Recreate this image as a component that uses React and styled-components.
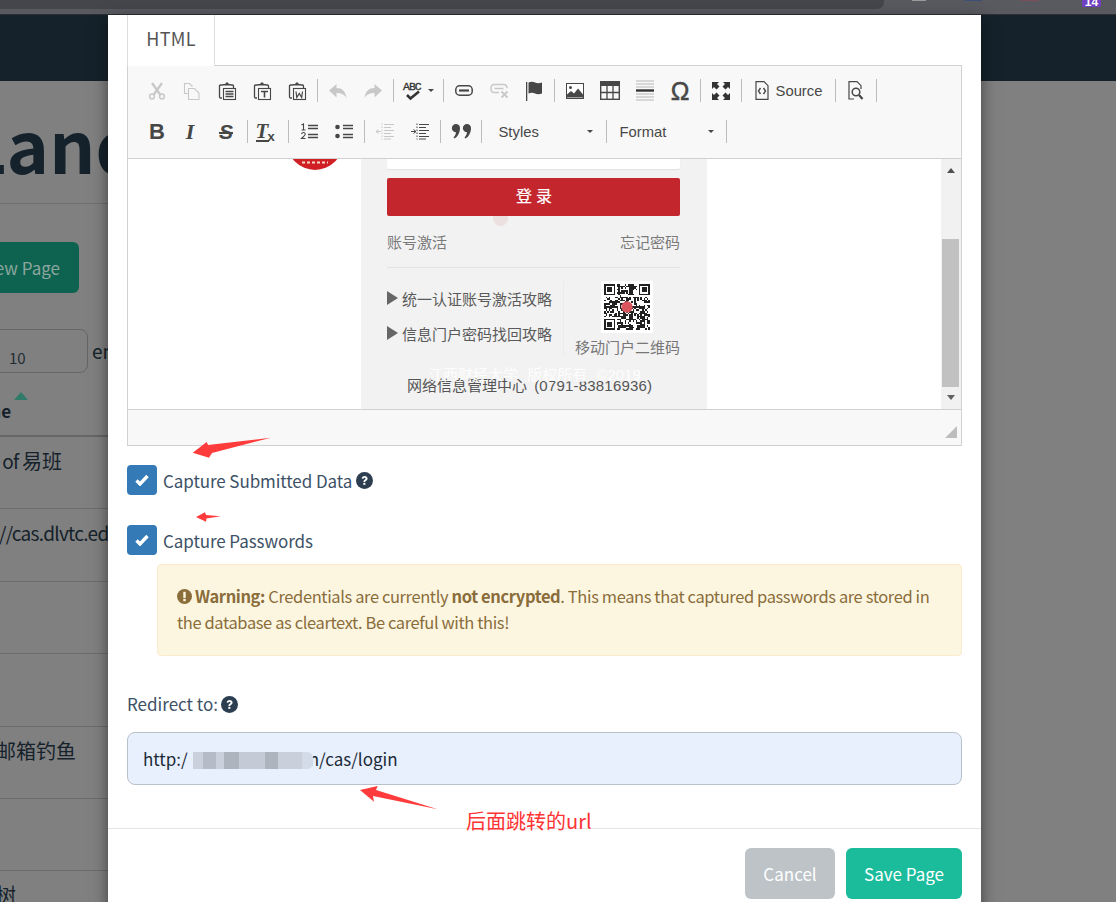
import React from "react";
import styled, { createGlobalStyle } from "styled-components";

const UI = `"Noto Sans CJK SC", "Source Sans Pro", sans-serif`;
const CKE = `"Liberation Sans", Arial, sans-serif`;
const CJK = `"Liberation Sans", "Noto Sans CJK SC", sans-serif`;

const Global = createGlobalStyle`
  html, body { margin: 0; padding: 0; background: #808080; }
  * { box-sizing: border-box; }
`;

const Page = styled.div`
  position: relative;
  width: 1116px;
  height: 902px;
  overflow: hidden;
  background: #808080;
  font-family: ${UI};
  color: #15222b;
`;

/* browser chrome sliver */
const Chrome = styled.div`
  height: 15px;
  background: #595a60;
  border-bottom: 1px solid #2f3033;
  display: flex;
  align-items: flex-start;
`;
const AddressBar = styled.div`
  width: 884px;
  height: 9px;
  background: #45464b;
  border-bottom-right-radius: 7px;
`;
const Ext = styled.div`
  width: ${p => p.$w}px;
  height: 1px;
  margin-left: ${p => p.$gap}px;
  background: ${p => p.$c};
`;
const Badge = styled.div`
  width: 19px;
  height: 7px;
  margin-left: 43px;
  background: #6f3fc4;
  border-radius: 0 0 2px 2px;
  color: #fff;
  font: 700 12px/5px ${CKE};
  text-align: center;
  overflow: hidden;
`;

const Navbar = styled.div`
  height: 66px;
  background: #15222b;
`;

/* dimmed page behind the modal */
const Backdrop = styled.div`
  width: 108px;
  height: 821px;
  overflow: hidden;
`;
const Heading = styled.h1`
  margin: 0 0 0 -35px;
  height: 122px;
  padding-top: 20px;
  font: 700 72px/84px ${UI};
  white-space: nowrap;
`;
const Rule = styled.div`
  height: 1px;
  background: #6f6f6f;
`;
const NewButton = styled.div`
  width: 120px;
  height: 51px;
  margin: 38px 0 0 -41px;
  padding-right: 19px;
  background: #0e6350;
  border-radius: 6px;
  color: #8ba69e;
  font: 400 17px/51px ${UI};
  text-align: right;
  white-space: nowrap;
`;
const Controls = styled.div`
  display: flex;
  align-items: flex-start;
  gap: 4px;
  margin-top: 36px;
`;
const Select = styled.div`
  width: 108px;
  height: 44px;
  flex: none;
  margin-left: -20px;
  padding: 17px 0 0 28px;
  border: 1px solid #666;
  border-radius: 8px;
  font: 400 15px/22px ${UI};
  color: #222d33;
`;
const Entries = styled.span`
  font: 400 19px/44px ${UI};
  white-space: nowrap;
`;
const HeadCell = styled.div`
  height: 64px;
  padding-top: 19px;
  border-bottom: 2px solid #666;
`;
const SortCaret = styled.div`
  width: 0;
  margin-left: 14px;
  border-left: 7px solid transparent;
  border-right: 7px solid transparent;
  border-bottom: 8px solid #2f7a68;
`;
const HeadName = styled.div`
  margin: -1px 0 0 -38px;
  font: 700 17px/24px ${UI};
`;
const TableRow = styled.div`
  height: 72.4px;
  padding-top: 10px;
  border-bottom: 1px solid #6c6c6c;
  font: 400 19px/28px ${UI};
  letter-spacing: -0.7px;
  white-space: nowrap;
`;
const Cell = styled.div`
  margin-left: ${p => p.$left || 0}px;
`;
const Han = styled.span`
  font-size: 20px;
  letter-spacing: 0;
`;

/* modal */
const Modal = styled.div`
  position: absolute;
  left: 108px;
  top: 15px;
  width: 873px;
  height: 900px;
  background: #fff;
  box-shadow: 0 5px 15px rgba(0, 0, 0, 0.5);
  color: #3d5166;
`;
const ModalBody = styled.div`
  padding: 0 19px;
`;
const TabBar = styled.div`
  height: 50px;
  display: flex;
`;
const Tab = styled.div`
  width: 88px;
  height: 51px;
  border: 1px solid #ddd;
  border-width: 0 1px;
  background: #fff;
  color: #555;
  font: 400 18px/46px ${UI};
  text-align: center;
  letter-spacing: 0.3px;
  position: relative;
  z-index: 1;
`;
const Editor = styled.div`
  width: 835px;
  border: 1px solid #d1d1d1;
  background: #f8f8f8;
`;
const Toolbar = styled.div`
  height: 93px;
  padding: 4px 0 0 11.5px;
  border-bottom: 1px solid #d1d1d1;
  background: #f8f8f8;
`;
const ToolRow = styled.div`
  height: 41px;
  display: flex;
  align-items: center;
`;
const ToolBtn = styled.div`
  width: ${p => p.$w || 35}px;
  height: 30px;
  flex: none;
  display: flex;
  align-items: center;
  justify-content: center;
  color: ${p => (p.$off ? "#c8c8c8" : "#474747")};
  svg { display: block; overflow: visible; }
`;
const Sep = styled.div`
  width: 1px;
  height: 23px;
  flex: none;
  margin: 0 3px 0 2px;
  background: #bcbcbc;
`;
const BoldGlyph = styled.span`
  font: 700 22px/22px ${CKE};
  color: #474747;
`;
const OmegaGlyph = styled.span`
  font: 400 25px/24px ${CKE};
  color: #474747;
  -webkit-text-stroke: 0.5px #474747;
`;
const ItalicGlyph = styled.span`
  font: italic 700 22px/22px "Liberation Serif", serif;
  color: #474747;
  margin-right: 4px;
`;
const StrikeGlyph = styled.span`
  font: italic 700 21px/22px ${CKE};
  color: #474747;
  text-decoration: line-through;
  text-decoration-thickness: 2px;
  margin-right: 2px;
`;
const ClearGlyph = styled.span`
  font: italic 700 21px/19px "Liberation Serif", serif;
  color: #474747;
  border-bottom: 2px solid #474747;
  display: inline-block;
  height: 20px;
  width: 13px;
  margin-right: 12px;
  position: relative;
  & > i {
    position: absolute;
    left: 12px;
    top: 8px;
    font: 700 13px/13px ${CKE};
  }
`;
const SourceLabel = styled.span`
  font: 400 14.8px/18px ${CKE};
  color: #474747;
  margin-left: 7px;
`;
const Combo = styled.div`
  width: ${p => p.$w}px;
  height: 30px;
  flex: none;
  display: flex;
  align-items: center;
  justify-content: space-between;
  padding: 0 ${p => p.$right}px 0 ${p => p.$left}px;
  font: 400 14.8px/18px ${CKE};
  color: #474747;
`;
const DownArrow = styled.span`
  width: 0;
  margin-left: ${p => p.$left || 0}px;
  border-left: 3.5px solid transparent;
  border-right: 3.5px solid transparent;
  border-top: 3.5px solid #474747;
`;

/* iframe content */
const Frame = styled.div`
  height: 250px;
  background: #fff;
  display: flex;
  overflow: hidden;
`;
const FrameLeft = styled.div`
  width: 233px;
  padding-left: 159px;
`;
const LoginPanel = styled.div`
  position: relative;
  width: 346px;
  height: 250px;
  padding: 0 27px 0 26px;
  background: #f2f2f2;
  font-family: ${CJK};
`;
const FrameRight = styled.div`
  flex: 1;
`;
const Scrollbar = styled.div`
  width: 20px;
  padding: 0 2px 0 1px;
  background: #f1f1f1;
  display: flex;
  flex-direction: column;
  align-items: center;
`;
const ScrollArrow = styled.div`
  width: 0;
  margin: ${p => p.$m};
  border-left: 4px solid transparent;
  border-right: 4px solid transparent;
  ${p => (p.$down ? "border-top: 5px solid #606060;" : "border-bottom: 5px solid #505050;")}
`;
const ScrollThumb = styled.div`
  width: 100%;
  height: 148px;
  margin-top: 66px;
  background: #c1c1c1;
`;
const FakeInput = styled.div`
  height: 10px;
  background: #fff;
  border-radius: 0 0 2px 2px;
  box-shadow: 0 1px 1px #e2e2e2;
`;
const LoginButton = styled.div`
  position: relative;
  z-index: 1;
  height: 38px;
  margin-top: 9px;
  padding-left: 5px;
  background: #c4262e;
  border-radius: 2px;
  color: #fff;
  font: 400 16px/38px ${CJK};
  text-align: center;
  letter-spacing: 4px;
  -webkit-text-stroke: 0.2px #fff;
`;
const Ripple = styled.div`
  position: absolute;
  left: 132px;
  top: 52px;
  width: 15px;
  height: 15px;
  border-radius: 50%;
  background: #ece0e1;
`;
const LinkRow = styled.div`
  display: flex;
  justify-content: space-between;
  margin-top: 16px;
  padding-bottom: 13px;
  border-bottom: 1px solid #e2e2e2;
  font-size: 15px;
  line-height: 22px;
  color: #7a7a7a;
`;
const InfoBlock = styled.div`
  display: flex;
  margin-top: 13px;
  height: 75px;
`;
const GuideList = styled.div`
  width: 177px;
  padding-top: 6px;
  border-right: 1px solid #ebebeb;
`;
const Guide = styled.div`
  display: flex;
  align-items: center;
  height: 22px;
  margin-bottom: 13px;
  font-size: 15px;
  color: #5a5a5a;
  white-space: nowrap;
  &::before {
    content: "";
    width: 0;
    margin-right: 4px;
    border-left: 11px solid #666;
    border-top: 7px solid transparent;
    border-bottom: 7px solid transparent;
  }
`;
const QrCol = styled.div`
  flex: 1;
  display: flex;
  flex-direction: column;
  align-items: flex-end;
`;
const QrBox = styled.div`
  width: 52px;
  height: 52px;
  margin-right: 27px;
  padding: 3px;
  background: #fff;
  svg { display: block; filter: blur(0.4px); }
`;
const QrCaption = styled.div`
  margin-top: 4px;
  font-size: 15px;
  line-height: 22px;
  color: #777;
  white-space: nowrap;
`;
const FooterLine = styled.div`
  margin: 19px 0 0 20px;
  font-size: 15px;
  line-height: 22px;
  color: #555;
  white-space: nowrap;
`;
const Phone = styled.span`
  margin-left: 3px;
  letter-spacing: 0.2px;
`;
const Copyright = styled.div`
  position: absolute;
  left: 67px;
  top: 205px;
  font-size: 15px;
  line-height: 22px;
  word-spacing: 5px;
  color: rgba(255, 255, 255, 0.9);
  white-space: nowrap;
`;
const EditorFoot = styled.div`
  height: 36px;
  border-top: 1px solid #d1d1d1;
  background: #f8f8f8;
  display: flex;
  justify-content: flex-end;
  align-items: flex-end;
  padding: 0 4px 7px 0;
`;
const Resizer = styled.div`
  width: 0;
  border-left: 12px solid transparent;
  border-bottom: 12px solid #bdbdbd;
`;

/* form */
const CheckRow = styled.div`
  display: flex;
  align-items: center;
  height: 30px;
  margin-top: ${p => p.$top}px;
  font: 400 17px/30px ${UI};
  letter-spacing: -0.08px;
`;
const CheckBox = styled.div`
  width: 30px;
  height: 30px;
  margin-right: 6px;
  background: #337ab7;
  border-radius: 4px;
  display: flex;
  align-items: center;
  justify-content: center;
`;
const CheckLabel = styled.span`
  margin-top: 2px;
`;
const Help = styled.span`
  display: inline-flex;
  margin: ${p => p.$top || 0}px 0 0 ${p => p.$left || 4}px;
  color: #2c3e50;
`;
const Warning = styled.div`
  margin: 9px 0 0 30px;
  height: 92px;
  padding: 18px 19px 0;
  background: #fcf6e1;
  border: 1px solid #faebcc;
  border-radius: 4px;
  color: #8a6d3b;
  font: 400 16.5px/26px ${UI};
  letter-spacing: -0.39px;
  b { font-weight: 700; }
  svg { vertical-align: -1px; margin-right: 3px; }
`;
const RedirectLabel = styled.div`
  margin-top: 35px;
  font: 400 17px/26px ${UI};
  display: flex;
  align-items: center;
`;
const UrlField = styled.div`
  height: 53px;
  margin-top: 15px;
  padding-left: 15px;
  background: #e8f0fe;
  border: 1px solid #b9c1cc;
  border-radius: 8px;
  color: #1c2a36;
  font: 400 17px/51px ${UI};
  white-space: nowrap;
`;
const Smudge = styled.span`
  display: inline-block;
  width: 120px;
  height: 17px;
  margin: 0 -4px 0 5px;
  vertical-align: -3px;
  border-radius: 0 6px 6px 0;
  filter: blur(0.5px);
  background: linear-gradient(
    90deg,
    #cad1dd 0 8%,
    #b5bcc8 8% 19%,
    #cad1dd 19% 26%,
    #adb4be 26% 38%,
    #c4cbd6 38% 60%,
    #adb4be 60% 71%,
    #c9d0dc 71% 91%,
    #d3dbe8 91% 100%
  );
`;
const Divider = styled.div`
  height: 1px;
  margin-top: 43px;
  background: #e5e5e5;
`;
const ModalFooter = styled.div`
  display: flex;
  justify-content: flex-end;
  gap: 11px;
  padding: 19px 19px 0 0;
`;
const ActionButton = styled.div`
  height: 51px;
  width: ${p => p.$w}px;
  background: ${p => p.$bg};
  border-radius: 6px;
  color: #fff;
  font: 400 17px/51px ${UI};
  text-align: center;
`;

/* screenshot annotations on top of everything */
const Marks = styled.svg`
  position: absolute;
  left: 0;
  top: 0;
  pointer-events: none;
`;
const Note = styled.div`
  position: absolute;
  left: 466px;
  top: 807px;
  color: #ff3333;
  font: 400 20px/28px ${UI};
  white-space: nowrap;
`;

const S = ({ children, w = 18, h = 18 }) => (
  <svg width={w} height={h} viewBox={`0 0 ${w} ${h}`} fill="none" stroke="currentColor">
    {children}
  </svg>
);

const Clip = ({ children }) => (
  <S>
    <path d="M5 3H2.6Q1.5 3 1.5 4.2v10.6Q1.5 16 2.6 16H4M13 3h1.6Q15.5 3 15.5 4v2" strokeWidth="1.3" />
    <path d="M5 3.4V2h2.2L8 .6h2l.8 1.4H13v1.4z" fill="currentColor" stroke="none" />
    <rect x="5.5" y="6.5" width="12" height="11" strokeWidth="1.1" />
    {children}
  </S>
);

const Icons = {
  cut: (
    <S>
      <path d="M4 1l8.5 12M14 1L5.5 13" strokeWidth="2.2" />
      <circle cx="4" cy="14.5" r="2.4" strokeWidth="1.5" />
      <circle cx="14" cy="14.5" r="2.4" strokeWidth="1.5" />
    </S>
  ),
  copy: (
    <S>
      <path d="M5.5 11.5H1.5V1.5h5l3 3" strokeWidth="1.1" />
      <path d="M5.5 6.5h6l4.5 4.5v6.5H5.5z" strokeWidth="1.1" />
    </S>
  ),
  pasteList: (
    <Clip>
      <path d="M7.5 9.5h8M7.5 12h8M7.5 14.5h8" strokeWidth="1.3" />
    </Clip>
  ),
  pasteText: (
    <Clip>
      <path d="M8 9.5h7M11.5 9.5v6" strokeWidth="1.6" />
    </Clip>
  ),
  pasteWord: (
    <Clip>
      <path d="M8 9.5l.8 6 2.5-4 2.4 4 .8-6" strokeWidth="1.2" />
    </Clip>
  ),
  undo: (
    <svg width="18" height="14" viewBox="0 0 18 14" fill="currentColor">
      <path d="M0 6.5L7.5 0v4c5.5 0 9 3 10 10-2-3.500-5-5-10-5v4.500z" />
    </svg>
  ),
  redo: (
    <svg width="18" height="14" viewBox="0 0 18 14" fill="currentColor">
      <path d="M18 6.500L10.500 0v4c-5.500 0-9 3-10 10 2-3.500 5-5 10-5v4.500z" />
    </svg>
  ),
  spell: (
    <svg width="20" height="20" viewBox="0 0 20 20" fill="none" stroke="#333">
      <text x="0" y="9" fill="#333" stroke="#333" strokeWidth=".3" fontFamily="Liberation Mono, monospace" fontSize="11.5" letterSpacing="-1">ABC</text>
      <path d="M4 14l3.500 3.500L16 10.500" strokeWidth="2.600" />
    </svg>
  ),
  link: (
    <svg width="18" height="11" viewBox="0 0 18 11" fill="none" stroke="currentColor" strokeWidth="1.500">
      <rect x=".8" y=".8" width="16.400" height="9.400" rx="3.800" />
      <path d="M4 5.500h10" strokeWidth="2.200" />
    </svg>
  ),
  unlink: (
    <svg width="19" height="15" viewBox="0 0 19 15" fill="none" stroke="currentColor" strokeWidth="1.500">
      <path d="M9 9.500H4.300Q1 9.500 1 5.500T4.300 1.500h9.400Q17 1.500 17 5.300" />
      <path d="M4.500 5.500h9" />
      <path d="M11.500 8.500l6 6M17.500 8.500l-6 6" strokeWidth="1.800" />
    </svg>
  ),
  flag: (
    <svg width="17" height="20" viewBox="0 0 17 20" fill="currentColor">
      <path d="M0 1h1.300v19H0z" />
      <path d="M2.500 1.500C5 .5 7 .500 9 1.500s4.500 1 7 0v11c-2.500 1-5 1-7 0s-4-1-6.500 0z" />
    </svg>
  ),
  image: (
    <svg width="18" height="16" viewBox="0 0 18 16" fill="none">
      <rect x=".5" y=".5" width="17" height="15" fill="#fff" stroke="currentColor" />
      <path d="M1 14.500v-3l4-3.500 3 2.500 4-5 5 6v3z" fill="currentColor" />
      <circle cx="4.500" cy="4.500" r="1.500" fill="currentColor" />
    </svg>
  ),
  table: (
    <svg width="20" height="19" viewBox="0 0 20 19" fill="none" stroke="currentColor">
      <rect x=".7" y=".7" width="18.600" height="17.600" strokeWidth="1.400" />
      <path d="M0 0h20v5H0z" fill="currentColor" stroke="none" />
      <path d="M7 5v13M13 5v13M0 11.500h20" strokeWidth="1.300" />
    </svg>
  ),
  hr: (
    <svg width="18" height="21" viewBox="0 0 18 21" fill="none" stroke="#b5b5b5">
      <path d="M0 1h18M0 4h18M0 7h18M0 14h18M0 17h18M0 20h18" strokeWidth="1.200" />
      <path d="M0 10.500h18" stroke="#333" strokeWidth="2.400" />
    </svg>
  ),
  maximize: (
    <svg width="18" height="18" viewBox="0 0 18 18" fill="#333">
      <path d="M0 0h7L5 2l2.500 2.500-3 3L2 5 0 7zM18 0h-7l2 2-2.500 2.500 3 3L16 5l2 2zM0 18h7l-2-2 2.500-2.500-3-3L2 13l-2-2zM18 18h-7l2-2-2.500-2.500 3-3L16 13l2-2z" />
    </svg>
  ),
  source: (
    <svg width="14" height="19" viewBox="0 0 14 19" fill="none" stroke="currentColor">
      <path d="M1 .7h8l4 4v13.600H1z" strokeWidth="1.200" />
      <path d="M5.500 7L3.500 10l2 3M8.500 7l2 3-2 3" strokeWidth="1.400" />
    </svg>
  ),
  preview: (
    <svg width="16" height="19" viewBox="0 0 16 19" fill="none" stroke="currentColor">
      <path d="M6 18H1V.7h8l4 4V8" strokeWidth="1.200" />
      <circle cx="8" cy="11" r="3.800" strokeWidth="1.500" />
      <path d="M11 14l3.500 4" strokeWidth="2.200" />
    </svg>
  ),
  ol: (
    <svg width="18" height="17" viewBox="0 0 18 17" fill="none" stroke="currentColor">
      <path d="M8 2.500h10M8 5.500h10M8 11.500h10M8 14.500h10" strokeWidth="1.300" />
      <path d="M1.500 2L3.500 1v6M1.500 7h4M1.500 11q.500-1.500 2-1.500t1.800 1.500q0 1-3.800 4.500h4" strokeWidth="1.100" />
    </svg>
  ),
  ul: (
    <svg width="18" height="15" viewBox="0 0 18 15" fill="none" stroke="currentColor">
      <circle cx="2.500" cy="3" r="2.300" fill="currentColor" stroke="none" />
      <circle cx="2.500" cy="12" r="2.300" fill="currentColor" stroke="none" />
      <path d="M8 1.500h10M8 4.500h10M8 10.500h10M8 13.500h10" strokeWidth="1.300" />
    </svg>
  ),
  outdent: (
    <svg width="18" height="17" viewBox="0 0 18 17" fill="none" stroke="currentColor">
      <path d="M6 .5v16" strokeWidth="1" strokeDasharray="1.500 1.500" />
      <path d="M8 1.500h10M8 4.500h7M8 7.500h10M8 10.500h7M8 13.500h10M8 16h7" strokeWidth="1" />
      <path d="M0 8.500h5M0 8.500l2.500-2M0 8.500l2.500 2" strokeWidth="1" />
    </svg>
  ),
  indent: (
    <svg width="18" height="17" viewBox="0 0 18 17" fill="none" stroke="currentColor">
      <path d="M6 .5v16" strokeWidth="1" strokeDasharray="1.500 1.500" />
      <path d="M8 1.500h10M8 4.500h7M8 7.500h10M8 10.500h7M8 13.500h10M8 16h7" strokeWidth="1" />
      <path d="M0 8.500h5M5 8.500l-2.500-2M5 8.500l-2.500 2" strokeWidth="1" />
    </svg>
  ),
  quote: (
    <svg width="19" height="15" viewBox="0 0 19 15" fill="currentColor">
      <path d="M4 0a4 4 0 0 1 4 4.200C8 8.500 5.500 13 2.500 14.500L1.500 13.500C3 12 3.800 10.500 4 8.300A4.100 4.100 0 0 1 4 0z" />
      <path d="M15 0a4 4 0 0 1 4 4.200c0 4.300-2.500 8.800-5.500 10.300l-1-1c1.500-1.500 2.300-3 2.500-5.200A4.100 4.100 0 0 1 15 0z" />
    </svg>
  ),
};

const Tool = ({ name, off, w, children }) => (
  <ToolBtn $off={off} $w={w}>
    {name ? Icons[name] : children}
  </ToolBtn>
);

const QuestionIcon = () => (
  <svg width="17" height="17" viewBox="0 0 16 16">
    <circle cx="8" cy="8" r="8" fill="currentColor" />
    <path d="M5.300 6.200C5.500 4.600 6.600 3.700 8.100 3.700c1.600 0 2.800 1 2.800 2.300 0 1.200-.7 1.700-1.400 2.200-.6.400-.7.700-.7 1.200H7c0-1.100.3-1.600 1-2.100.6-.4 1-.7 1-1.200 0-.5-.4-.8-.9-.8-.6 0-1 .4-1.100 1z" fill="#fff" />
    <rect x="6.900" y="10.200" width="1.900" height="1.900" fill="#fff" />
  </svg>
);

const Check = () => (
  <svg width="14" height="12" viewBox="0 0 14 12" fill="none" stroke="#fff" strokeWidth="3.400">
    <path d="M1.500 6.500l3.500 3.500 7.500-8" />
  </svg>
);

// pseudo random qr pattern, only has to read as a qr code
const QrCode = () => {
  const n = 29;
  const cells = [];
  let seed = 73;
  for (let y = 0; y < n; y++) {
    for (let x = 0; x < n; x++) {
      seed = (seed * 1103515245 + 12345) & 0x7fffffff;
      const corner = (x < 8 && y < 8) || (x > n - 9 && y < 8) || (x < 8 && y > n - 9);
      if (!corner && (seed >> 16) % 100 < 52) cells.push(<rect key={`${x}-${y}`} x={x} y={y} width="1" height="1" />);
    }
  }
  const finder = (x, y) => (
    <g key={`f${x}${y}`}>
      <path d={`M${x} ${y}h7v7h-7z M${x + 1} ${y + 1}v5h5v-5z`} fillRule="evenodd" />
      <rect x={x + 2} y={y + 2} width="3" height="3" />
    </g>
  );
  return (
    <svg width="46" height="46" viewBox={`0 0 ${n} ${n}`} fill="#222" shapeRendering="crispEdges">
      {cells}
      {finder(0, 0)}
      {finder(n - 7, 0)}
      {finder(0, n - 7)}
      <circle cx="14.500" cy="14.500" r="3.600" fill="#d9565f" shapeRendering="auto" />
    </svg>
  );
};

const Seal = styled.svg`
  display: block;
`;

export default function App() {
  return (
    <Page>
      <Global />
      <Chrome>
        <AddressBar />
        <Ext $w={14} $gap={28} $c="#9b9b9b" />
        <Ext $w={17} $gap={39} $c="#3e4f7a" />
        <Ext $w={19} $gap={38} $c="#7a4f5a" />
        <Badge>14</Badge>
      </Chrome>
      <Navbar />
      <Backdrop>
        <Heading>Land</Heading>
        <Rule />
        <NewButton>New Page</NewButton>
        <Controls>
          <Select>10</Select>
          <Entries>en</Entries>
        </Controls>
        <HeadCell>
          <SortCaret />
          <HeadName>Name</HeadName>
        </HeadCell>
        <TableRow>
          <Cell $left={-49}>Clone of <Han>易班</Han></Cell>
        </TableRow>
        <TableRow>
          <Cell $left={-40}>http://cas.dlvtc.ed</Cell>
        </TableRow>
        <TableRow />
        <TableRow />
        <TableRow>
          <Cell $left={-4}><Han>邮箱钓鱼</Han></Cell>
        </TableRow>
        <TableRow />
        <TableRow>
          <Cell $left={-4}><Han>树</Han></Cell>
        </TableRow>
      </Backdrop>

      <Modal>
        <ModalBody>
          <TabBar>
            <Tab>HTML</Tab>
          </TabBar>
          <Editor>
            <Toolbar>
              <ToolRow>
                <Tool name="cut" off />
                <Tool name="copy" off />
                <Tool name="pasteList" />
                <Tool name="pasteText" />
                <Tool name="pasteWord" />
                <Sep />
                <Tool name="undo" off />
                <Tool name="redo" off />
                <Sep />
                <Tool w={44}>
                  {Icons.spell}
                  <DownArrow $left={5} />
                </Tool>
                <Sep />
                <Tool name="link" />
                <Tool name="unlink" off />
                <Tool name="flag" />
                <Sep />
                <Tool name="image" />
                <Tool name="table" />
                <Tool name="hr" />
                <Tool>
                  <OmegaGlyph>Ω</OmegaGlyph>
                </Tool>
                <Sep />
                <Tool name="maximize" />
                <Sep />
                <Tool w={88}>
                  {Icons.source}
                  <SourceLabel>Source</SourceLabel>
                </Tool>
                <Sep />
                <Tool name="preview" />
                <Sep />
              </ToolRow>
              <ToolRow>
                <Tool>
                  <BoldGlyph>B</BoldGlyph>
                </Tool>
                <Tool>
                  <ItalicGlyph>I</ItalicGlyph>
                </Tool>
                <Tool>
                  <StrikeGlyph>S</StrikeGlyph>
                </Tool>
                <Sep />
                <Tool>
                  <ClearGlyph>
                    T<i>x</i>
                  </ClearGlyph>
                </Tool>
                <Sep />
                <Tool name="ol" />
                <Tool name="ul" />
                <Sep />
                <Tool name="outdent" off />
                <Tool name="indent" />
                <Sep />
                <Tool name="quote" />
                <Sep />
                <Combo $w={119} $left={14} $right={11}>
                  Styles
                  <DownArrow />
                </Combo>
                <Sep />
                <Combo $w={114.5} $left={10} $right={10}>
                  Format
                  <DownArrow />
                </Combo>
                <Sep />
              </ToolRow>
            </Toolbar>
            <Frame>
              <FrameLeft>
                <Seal width="56" height="11" viewBox="0 0 56 11">
                  <circle cx="28" cy="-17" r="28" fill="#d01f25" />
                  <path d="M15 3.500h26" stroke="#f4d9c4" strokeWidth="2" strokeDasharray="3 2" />
                </Seal>
              </FrameLeft>
              <LoginPanel>
                <FakeInput />
                <LoginButton>登录</LoginButton>
                <Ripple />
                <LinkRow>
                  <span>账号激活</span>
                  <span>忘记密码</span>
                </LinkRow>
                <InfoBlock>
                  <GuideList>
                    <Guide>统一认证账号激活攻略</Guide>
                    <Guide>信息门户密码找回攻略</Guide>
                  </GuideList>
                  <QrCol>
                    <QrBox>
                      <QrCode />
                    </QrBox>
                    <QrCaption>移动门户二维码</QrCaption>
                  </QrCol>
                </InfoBlock>
                <FooterLine>网络信息管理中心 <Phone>(0791-83816936)</Phone></FooterLine>
                <Copyright>江西财经大学 版权所有 ©2019</Copyright>
              </LoginPanel>
              <FrameRight />
              <Scrollbar>
                <ScrollArrow $m="9px 0 0" />
                <ScrollThumb />
                <ScrollArrow $down $m="8px 0 0" />
              </Scrollbar>
            </Frame>
            <EditorFoot>
              <Resizer />
            </EditorFoot>
          </Editor>

          <CheckRow $top={19}>
            <CheckBox>
              <Check />
            </CheckBox>
            <CheckLabel>Capture Submitted Data</CheckLabel>
            <Help $top={1}>
              <QuestionIcon />
            </Help>
          </CheckRow>
          <CheckRow $top={30}>
            <CheckBox>
              <Check />
            </CheckBox>
            <CheckLabel>Capture Passwords</CheckLabel>
          </CheckRow>
          <Warning>
            <svg width="15" height="15" viewBox="0 0 16 16">
              <circle cx="8" cy="8" r="8" fill="currentColor" />
              <rect x="6.700" y="3" width="2.600" height="6.500" fill="#fcf6e1" />
              <rect x="6.700" y="10.500" width="2.600" height="2.500" fill="#fcf6e1" />
            </svg>
            <b>Warning:</b> Credentials are currently <b>not encrypted</b>. This means that captured passwords are stored in the database as cleartext. Be careful with this!
          </Warning>
          <RedirectLabel>
            Redirect to:
            <Help $left={3}>
              <QuestionIcon />
            </Help>
          </RedirectLabel>
          <UrlField>
            http:/
            <Smudge />
            n/cas/login
          </UrlField>
        </ModalBody>
        <Divider />
        <ModalFooter>
          <ActionButton $w={90} $bg="#bdc3c7">Cancel</ActionButton>
          <ActionButton $w={116} $bg="#1abc9c">Save Page</ActionButton>
        </ModalFooter>
      </Modal>

      <Marks width="1116" height="902" viewBox="0 0 1116 902" fill="#ff3b3b">
        <polygon points="192.700,452.700 206.700,442 208,445 271,437.700 212,453 209,457.700" />
        <polygon points="196,517 205,512.300 206,515 220.700,516.300 206.500,518.500 206,521.700" />
        <polygon points="360,790 377.700,786 376,790 437.700,809.300 373,796 374,801.700" />
      </Marks>
      <Note>后面跳转的url</Note>
    </Page>
  );
}
